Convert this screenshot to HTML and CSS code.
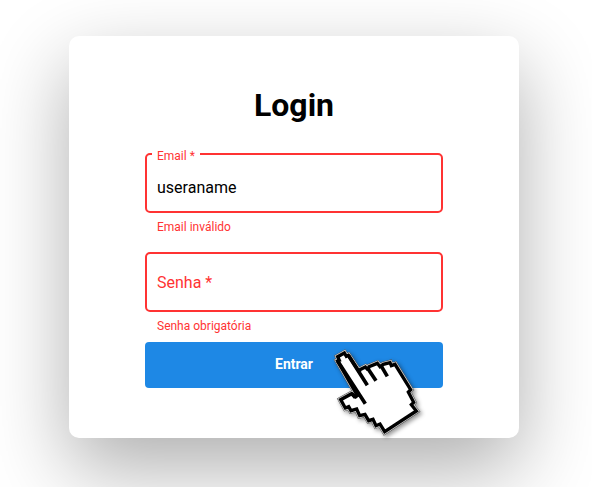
FILE: index.html
```html
<!DOCTYPE html>
<html lang="pt-BR">
<head>
<meta charset="utf-8">
<title>Login</title>
<link rel="stylesheet" href="styles.css">
</head>
<body>
<main class="card">
  <h1 class="title">Login</h1>
  <form class="form">
    <div class="field">
      <div class="box"><span class="label">Email *</span><span class="value">useraname</span></div>
      <p class="error">Email inválido</p>
    </div>
    <div class="field">
      <div class="box"><span class="placeholder">Senha *</span></div>
      <p class="error">Senha obrigatória</p>
    </div>
    <button class="submit" type="button">Entrar</button>
  </form>
</main>
<svg class="pointer" viewBox="0 0 330 315" aria-hidden="true">
  <defs>
    <path id="hand" d="M38 63L43 61L38 50L58 39L64 49L70 46L104 97L103 90L121 81L129 90L132 80L157 70L165 80L175 73L195 68L199 77L210 73L257 149L250 156L266 187L259 194L274 213L179 275L165 252L153 257L144 238L131 242L120 223L104 227L95 207L78 212L71 200L61 204L47 179L80 161L88 170L97 166L38 63Z"/>
  </defs>
  <use href="#hand" class="rim-dark"/>
  <use href="#hand" class="rim-light"/>
  <use href="#hand" class="outline"/>
  <path class="creases" d="M38 63L121 191M70 46L127 136M130 88L153 122M168 77L187 109M80 161L92 170L103 161"/>
</svg>
</body>
</html>
```
FILE: styles.css
```css
* { box-sizing: border-box; }
html { height: 100%; overflow: hidden; }
body {
  margin: 0;
  height: 100%;
  overflow: hidden;
  background: #fff;
  font-family: Roboto, sans-serif;
}
.card {
  width: 450px;
  height: 402px;
  margin: 36px 0 0 69px;
  padding: 50px 76px;
  border-radius: 10px;
  background: #fff;
  box-shadow: 0 30px 80px rgba(0, 0, 0, .32);
}
.title {
  margin: 0 0 29px;
  font-size: 32px;
  line-height: 38px;
  font-weight: 700;
  text-align: center;
  color: #000;
}
.field { height: 99px; }
.box {
  position: relative;
  display: flex;
  align-items: center;
  height: 60px;
  padding: 0 10px;
  border: 2px solid #f33;
  border-radius: 5px;
  font-size: 16px;
}
.label {
  position: absolute;
  left: 5px;
  top: -6px;
  padding: 0 5px;
  background: #fff;
  font-size: 12px;
  line-height: 14px;
  color: #f33;
}
.value { padding-top: 8px; color: #000; }
.placeholder { color: #f33; }
.error {
  margin: 7px 0 0 12px;
  font-size: 12px;
  line-height: 14px;
  color: #f33;
}
.submit {
  display: block;
  width: 100%;
  height: 46px;
  margin-top: -9px;
  padding: 0 0 2px;
  border: 0;
  border-radius: 4px;
  background: #1e88e5;
  color: #fff;
  font: 700 14px Roboto, sans-serif;
}
.pointer {
  position: absolute;
  left: 325px;
  top: 340px;
  width: 110px;
  height: 105px;
  overflow: visible;
  filter: drop-shadow(2px 2px 2px rgba(0, 0, 0, .4));
}
.pointer path { stroke-linejoin: miter; stroke-miterlimit: 2; }
.rim-dark { fill: #fff; stroke: #555; stroke-width: 17; }
.rim-light { fill: #fff; stroke: #ddd; stroke-width: 14; }
.outline { fill: #fff; stroke: #000; stroke-width: 10; }
.creases { fill: none; stroke: #000; stroke-width: 11; }
```
